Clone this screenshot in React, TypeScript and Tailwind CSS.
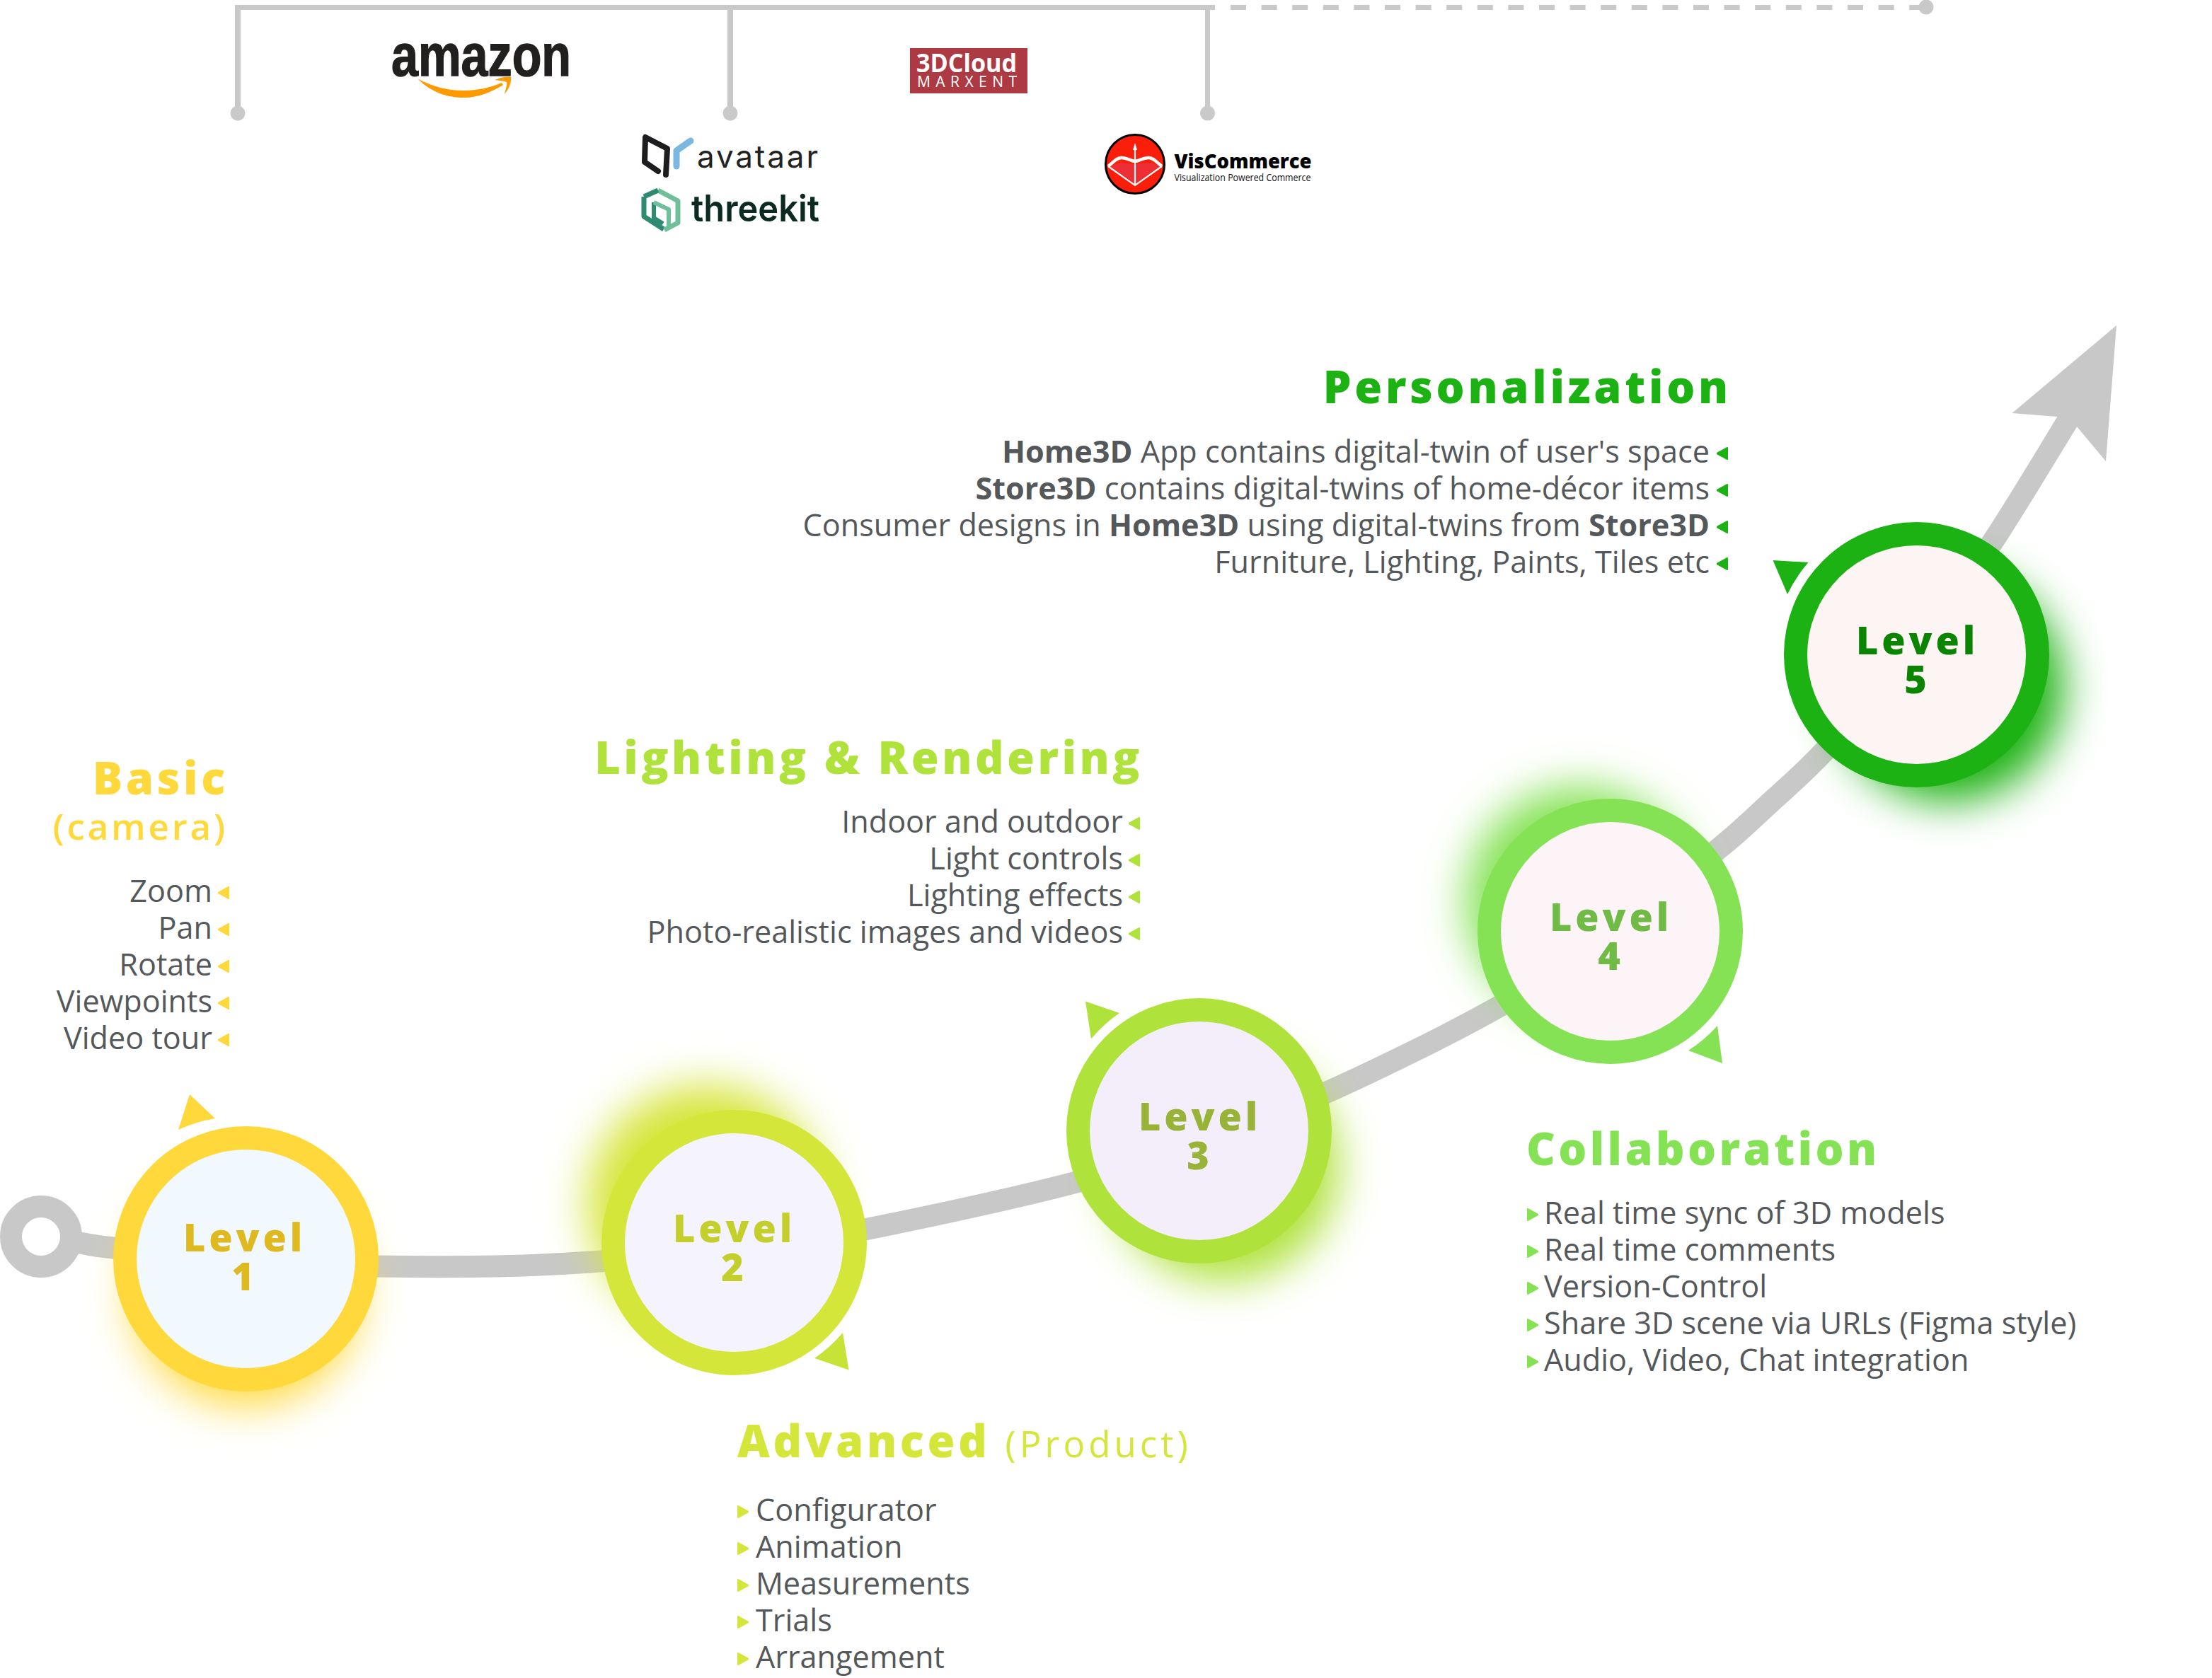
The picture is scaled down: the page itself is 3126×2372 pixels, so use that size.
import type { ReactNode } from "react";

// centre line of the grey road, in page pixels
const road: [number, number][] = [
  [58, 1748], [113, 1757], [160, 1764], [347, 1784], [534, 1790], [700, 1790], [834, 1784],
  [1037, 1767], [1222, 1738], [1521, 1671], [1694, 1612], [1873, 1545], [2118, 1423],
  [2275, 1317], [2426, 1202], [2498, 1138], [2580, 1060], [2709, 915], [2814, 769], [2925, 590],
];

function smooth(points: [number, number][]) {
  let d = `M${points[0][0]} ${points[0][1]}`;
  for (let i = 0; i < points.length - 1; i++) {
    const p0 = points[i - 1] ?? points[i];
    const p1 = points[i];
    const p2 = points[i + 1];
    const p3 = points[i + 2] ?? p2;
    const c1x = p1[0] + (p2[0] - p0[0]) / 6;
    const c1y = p1[1] + (p2[1] - p0[1]) / 6;
    const c2x = p2[0] - (p3[0] - p1[0]) / 6;
    const c2y = p2[1] - (p3[1] - p1[1]) / 6;
    d += ` C${c1x} ${c1y} ${c2x} ${c2y} ${p2[0]} ${p2[1]}`;
  }
  return d;
}

const levels = [
  {
    n: 1,
    box: "left-[160px] top-[1592px] border-[#ffd93c] bg-[#f2f9fe] text-[#deb91f] shadow-[0px_45px_60px_-25px_#ffd93c] pb-[8px] pr-[4px]",
  },
  {
    n: 2,
    box: "left-[850px] top-[1569px] border-[#d5e63a] bg-[#f5f4fe] text-[#c4cf2c] shadow-[-40px_-55px_60px_-20px_#d5e63a] pt-[13px]",
  },
  {
    n: 3,
    box: "left-[1507px] top-[1411px] border-[#b0e23c] bg-[#f4eefa] text-[#98b338] shadow-[35px_50px_60px_-25px_#b0e23c] pt-[13px] pl-[2px]",
  },
  {
    n: 4,
    box: "left-[2088px] top-[1129px] border-[#85e255] bg-[#fdf4f8] text-[#70bb46] shadow-[-42px_-42px_60px_-25px_#85e255] pt-[13px] pl-[2px]",
  },
  {
    n: 5,
    box: "left-[2521px] top-[738px] border-[#1db213] bg-[#fdf4f4] text-[#0b8400] shadow-[45px_45px_60px_-25px_#1db213] pt-[13px] pl-[2px]",
  },
];

function Marker({ dir, color }: { dir: "left" | "right"; color: string }) {
  return (
    <svg viewBox="0 0 16 18" className={`mt-[6px] h-[18px] w-4 shrink-0 ${color}`}>
      <path d={dir === "left" ? "M15 1 L0.5 9 L15 17Z" : "M1 1 L15.5 9 L1 17Z"} strokeWidth="2" strokeLinejoin="round" />
    </svg>
  );
}

function List({
  items,
  dir,
  color,
  gap,
}: {
  items: ReactNode[];
  dir: "left" | "right";
  color: string;
  gap: string;
}) {
  return (
    <ul className="text-[43.2px] leading-[52px] text-[#54585a]">
      {items.map((item, i) => (
        <li key={i} className={`flex items-center whitespace-nowrap ${gap} ${dir === "left" ? "justify-end" : ""}`}>
          {dir === "right" && <Marker dir="right" color={color} />}
          <span>{item}</span>
          {dir === "left" && <Marker dir="left" color={color} />}
        </li>
      ))}
    </ul>
  );
}

function Timeline() {
  return (
    <svg viewBox="0 0 3126 2372" className="absolute inset-0 h-[2372px] w-[3126px]">
      {/* vendor brackets */}
      <g fill="#c9c9c9">
        <rect x="332" y="7" width="1385" height="7" />
        <rect x="332" y="7" width="8" height="150" />
        <rect x="1028" y="7" width="8" height="150" />
        <rect x="1703" y="7" width="7" height="150" />
        <circle cx="336" cy="160" r="10.5" />
        <circle cx="1032" cy="160" r="10.5" />
        <circle cx="1706.5" cy="160" r="10.5" />
        <circle cx="2722" cy="10" r="10.5" />
      </g>
      <line x1="1739" y1="10.5" x2="2720" y2="10.5" stroke="#c9c9c9" strokeWidth="7" strokeDasharray="22 21.6" />

      {/* road */}
      <path d={smooth(road)} fill="none" stroke="#c8c8c8" strokeWidth="31" />
      <circle cx="58" cy="1748" r="42.5" fill="#fff" stroke="#c8c8c8" strokeWidth="31" />
      <path d="M2991 460 L2843.5 584 L2907 589 L2921 596 L2935 603 L2976 652Z" fill="#c8c8c8" />

      {/* little triangles hugging each ring */}
      <path d="M268 1547 L252 1597 A205 205 0 0 1 304 1581Z" fill="#ffd93c" />
      <path d="M1199.5 1936.5 L1191 1884 A203 203 0 0 1 1151 1920Z" fill="#c8e338" />
      <path d="M1534 1415.5 L1542 1468.5 A203 203 0 0 1 1582 1432Z" fill="#b0e23c" />
      <path d="M2434 1503 L2427 1450 A203 203 0 0 1 2386 1485Z" fill="#85e255" />
      <path d="M2505.5 792 L2526 840 A203 203 0 0 1 2555.5 795Z" fill="#1db213" />
    </svg>
  );
}

function Logos() {
  return (
    <svg viewBox="0 0 3126 340" className="absolute left-0 top-0 h-[340px] w-[3126px]">
      {/* amazon */}
      <text
        x="553"
        y="107"
        textLength="254"
        lengthAdjust="spacingAndGlyphs"
        fontSize="84"
        fontWeight="700"
        fontFamily="Liberation Sans, sans-serif"
        fill="#221f1f"
        stroke="#221f1f"
        strokeWidth="1.5"
      >
        amazon
      </text>
      <path
        d="M590 111 C610 131 632 138 656 138 C676 138 695 130 711 120 L709 117 C692 124 675 128 655 128 C632 128 610 122 590 111Z"
        fill="#ff9900"
      />
      <path
        d="M699 113 C708 109 716 108 722 109 C723 117 719 126 713 133 C715 125 717 119 716 116 C711 114 705 114 699 113Z"
        fill="#ff9900"
      />

      {/* avataar */}
      <path
        d="M941 247 L943 210 L912 194 L911 229 L930 242"
        fill="none"
        stroke="#1d1d1f"
        strokeWidth="8"
        strokeLinejoin="round"
        strokeLinecap="round"
      />
      <path
        d="M956 235 L956 213 L976 199"
        fill="none"
        stroke="#7ab8e0"
        strokeWidth="9"
        strokeLinejoin="round"
        strokeLinecap="round"
      />
      <text x="985" y="237" textLength="171" fontSize="44" fontFamily="Inter, sans-serif" fill="#222">
        avataar
      </text>

      {/* threekit */}
      <path d="M910 278 L910 306 L938 324" fill="none" stroke="#2e8b72" strokeWidth="7" strokeLinejoin="round" />
      <path d="M930 269 L958 284 L958 315 L939 325" fill="none" stroke="#6fc09a" strokeWidth="7" strokeLinejoin="round" />
      <path d="M910 278 L930 269" fill="none" stroke="#2e8b72" strokeWidth="7" />
      <path d="M924 286 L924 308 L937 316" fill="none" stroke="#2e8b72" strokeWidth="6" strokeLinejoin="round" />
      <path d="M924 286 L945 296 L945 320" fill="none" stroke="#6fc09a" strokeWidth="6" strokeLinejoin="round" />
      <text
        x="977"
        y="313"
        textLength="181"
        lengthAdjust="spacingAndGlyphs"
        fontSize="52"
        fontWeight="600"
        fontFamily="Inter, sans-serif"
        fill="#0b2a22"
      >
        threekit
      </text>

      {/* 3D Cloud */}
      <rect x="1286" y="68" width="166" height="64" fill="#ad3a42" />
      <text
        x="1295"
        y="102"
        textLength="142"
        lengthAdjust="spacingAndGlyphs"
        fontSize="35"
        fontWeight="700"
        fontFamily="Open Sans, sans-serif"
        fill="#fff"
      >
        3DCloud
      </text>
      <text x="1296" y="123" textLength="141" fontSize="21" fontFamily="Open Sans, sans-serif" fill="#fff">
        MARXENT
      </text>

      {/* VisCommerce */}
      <circle cx="1604" cy="232" r="41.5" fill="#fb1e0a" stroke="#000" strokeWidth="3" />
      <path d="M1570 236 L1604 260 L1638 236 C1628 226 1614 232 1604 232 C1594 232 1580 226 1570 236Z" fill="#ee2e35" />
      <path
        d="M1566 235 C1572 231 1576 224 1584 223 C1592 222 1598 228 1604 228 C1610 228 1616 222 1624 223 C1632 224 1636 231 1642 235"
        fill="none"
        stroke="#fff"
        strokeWidth="4.5"
      />
      <path d="M1566 235 L1604 262 L1642 235 M1604 208 L1604 262" fill="none" stroke="#fff" strokeWidth="2.2" />
      <path d="M1604 202 L1601 212 L1607 212Z" fill="#fff" />
      <text
        x="1659.5"
        y="238"
        textLength="194"
        lengthAdjust="spacingAndGlyphs"
        fontSize="28"
        fontWeight="800"
        fontFamily="Open Sans, sans-serif"
        fill="#000"
      >
        VisCommerce
      </text>
      <text
        x="1659.5"
        y="256"
        textLength="193"
        lengthAdjust="spacingAndGlyphs"
        fontSize="14"
        fontFamily="Open Sans, sans-serif"
        fill="#111"
      >
        Visualization Powered Commerce
      </text>
    </svg>
  );
}

export default function App() {
  return (
    <div className="relative h-[2372px] w-[3126px] overflow-hidden bg-white font-['Open_Sans',sans-serif]">
      <Timeline />
      <Logos />

      {levels.map((l) => (
        <div
          key={l.n}
          className={`absolute flex size-[375px] flex-col items-center justify-center rounded-full border-[33px] text-[54px] font-extrabold leading-[55px] tracking-[0.09em] ${l.box}`}
        >
          <span>Level</span>
          <span>{l.n}</span>
        </div>
      ))}

      {/* Basic */}
      <section className="absolute right-[2802px] top-[1064px] text-right">
        <h2 className="pr-[1px] text-[63px] font-extrabold leading-[70px] tracking-[0.075em] text-[#ffd93c]">Basic</h2>
        <p className="mt-[5px] pr-[2px] text-[51px] font-semibold leading-[56px] tracking-[0.075em] text-[#ffd93c]">(camera)</p>
        <div className="mt-[38px]">
          <List
            dir="left"
            gap="gap-[8px]"
            color="fill-[#ffd93c] stroke-[#ffd93c]"
            items={["Zoom", "Pan", "Rotate", "Viewpoints", "Video tour"]}
          />
        </div>
      </section>

      {/* Lighting & Rendering */}
      <section className="absolute right-[1515px] top-[1035px] text-right">
        <h2 className="-mr-[4px] whitespace-nowrap text-[63px] font-extrabold leading-[70px] tracking-[0.072em] text-[#b0e23c]">
          Lighting &amp; Rendering
        </h2>
        <div className="mt-[30px]">
          <List
            dir="left"
            gap="gap-[8px]"
            color="fill-[#b0e23c] stroke-[#b0e23c]"
            items={["Indoor and outdoor", "Light controls", "Lighting effects", "Photo-realistic images and videos"]}
          />
        </div>
      </section>

      {/* Personalization */}
      <section className="absolute right-[684px] top-[511px] text-right">
        <h2 className="-mr-[5px] text-[63px] font-extrabold leading-[70px] tracking-[0.075em] text-[#1db213]">Personalization</h2>
        <div className="mt-[31px]">
          <List
            dir="left"
            gap="gap-[10px]"
            color="fill-[#1db213] stroke-[#1db213]"
            items={[
              <><b>Home3D</b> App contains digital-twin of user's space</>,
              <><b>Store3D</b> contains digital-twins of home-décor items</>,
              <>Consumer designs in <b>Home3D</b> using digital-twins from <b>Store3D</b></>,
              "Furniture, Lighting, Paints, Tiles etc",
            ]}
          />
        </div>
      </section>

      {/* Advanced */}
      <section className="absolute left-[1042px] top-[2001px]">
        <h2 className="whitespace-nowrap text-[63px] font-extrabold leading-[70px] tracking-[0.075em] text-[#d5e63a]">
          Advanced <span className="text-[51px] font-medium tracking-[0.1em]">(Product)</span>
        </h2>
        <div className="mt-[33px]">
          <List
            dir="right"
            gap="gap-[10px]"
            color="fill-[#d5e63a] stroke-[#d5e63a]"
            items={["Configurator", "Animation", "Measurements", "Trials", "Arrangement"]}
          />
        </div>
      </section>

      {/* Collaboration */}
      <section className="absolute left-[2158px] top-[1588px]">
        <h2 className="-ml-[1px] text-[63px] font-extrabold leading-[70px] tracking-[0.07em] text-[#85e255]">Collaboration</h2>
        <div className="mt-[30px]">
          <List
            dir="right"
            gap="gap-[8px]"
            color="fill-[#85e255] stroke-[#85e255]"
            items={[
              "Real time sync of 3D models",
              "Real time comments",
              "Version-Control",
              "Share 3D scene via URLs (Figma style)",
              "Audio, Video, Chat integration",
            ]}
          />
        </div>
      </section>
    </div>
  );
}
